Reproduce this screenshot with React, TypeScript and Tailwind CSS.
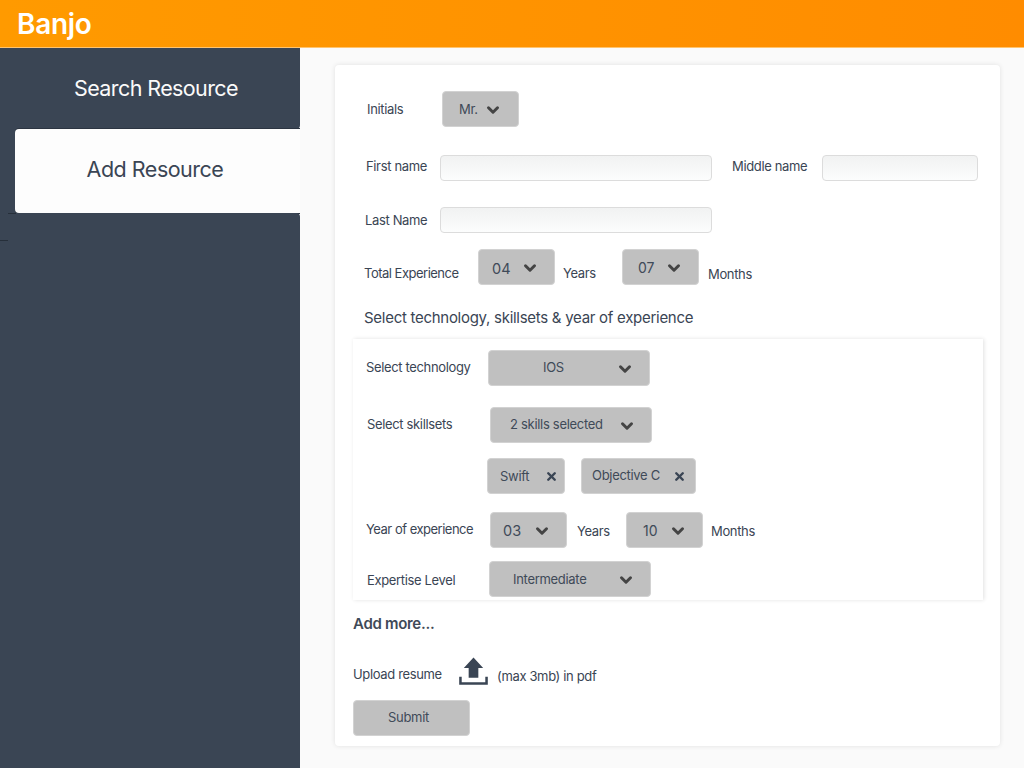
import { ChevronDown, X } from 'lucide-react'
import React from 'react'

function Dropdown({
    value,
    className,
    textClassName,
}: {
    value: string
    className: string
    textClassName: string
}) {
    return (
        <div
            className={`h-9 shrink-0 flex items-center rounded-[4px] bg-[#c0c0c0] border border-[#d2d2d2] text-[#3f4a58] ${className}`}
        >
            <span className={textClassName}>{value}</span>
            <ChevronDown size={18} strokeWidth={4} className="text-[#444] mt-[2px]" />
        </div>
    )
}

function Chip({ label, className, gap }: { label: string; className: string; gap: string }) {
    return (
        <div
            className={`h-9 shrink-0 flex items-center rounded-[4px] bg-[#c0c0c0] border border-[#d2d2d2] text-[#3f4a58] text-[13px] tracking-[-0.3px] ${className}`}
        >
            <span className={gap}>{label}</span>
            <X size={13} strokeWidth={4.5} className="text-[#3a4554]" />
        </div>
    )
}

function TextBox({ className }: { className: string }) {
    return (
        <div
            className={`h-[26px] shrink-0 rounded-[4px] border border-[#dcdcdc] bg-gradient-to-b from-[#f1f2f2] to-[#fcfdfd] ${className}`}
        />
    )
}

function Label({
    children,
    className,
    tight,
}: {
    children: React.ReactNode
    className: string
    tight?: boolean
}) {
    return (
        <span
            className={`shrink-0 text-[13px] text-[#3a4554] whitespace-nowrap ${
                tight ? 'tracking-[-0.5px]' : 'tracking-[-0.35px]'
            } ${className}`}
        >
            {children}
        </span>
    )
}

function UploadIcon() {
    return (
        <svg width="29" height="29" viewBox="0 0 30 29" className="shrink-0">
            <path d="M15 0 L25 11 L20 11 L20 21 L10 21 L10 11 L5 11 Z" fill="#3a4554" strokeLinejoin="round" />
            <path d="M1.5 20 V27 H28.5 V20" fill="none" stroke="#3a4554" strokeWidth="2.6" />
        </svg>
    )
}

export default function App() {
    return (
        <div className="w-[1024px] h-[768px] overflow-hidden flex flex-col bg-[#fafafa] font-['Inter',sans-serif]">
            <header className="h-[48px] shrink-0 flex items-center pl-[17px] bg-gradient-to-r from-[#ff9a00] to-[#ff8c00] border-b border-[#ffc46f]">
                <span className="text-[28px] font-semibold text-white tracking-[-0.3px]">Banjo</span>
            </header>
            <div className="flex flex-1 min-h-0">
                <aside className="w-[300px] shrink-0 relative flex flex-col">
                    <div className="h-[81px] flex items-center justify-center pl-[12px] rounded-br-[4px] bg-[#3a4554] text-[21.5px] tracking-[-0.6px] text-[#fafafa]">
                        Search Resource
                    </div>
                    <div className="h-[84px] pl-[15px] bg-[#3a4554]">
                        <div className="h-full flex items-center justify-center pr-[5px] pb-[4px] rounded-l-[4px] bg-[#fdfdfd] shadow-[0_-1px_0_#2c3542,0_1px_0_#2c3542] text-[21.5px] tracking-[-0.5px] text-[#3a4554]">
                            Add Resource
                        </div>
                    </div>
                    <div className="flex-1 rounded-tr-[4px] bg-[#3a4554]" />
                    <div className="absolute left-[8px] top-[165px] w-[8px] h-px bg-[#262f3a]" />
                    <div className="absolute left-0 top-[192px] w-[8px] h-px bg-[#262f3a]" />
                </aside>
                <main className="flex-1 min-w-0 pt-[17px] pl-[35px]">
                    <div className="w-[665px] h-[681px] rounded-[4px] bg-white shadow-[0_0_5px_rgba(0,0,0,0.1)] flex flex-col">
                        <div className="flex items-center mt-[26px] ml-[32px]">
                            <Label className="w-[75px] mt-[2px]">Initials</Label>
                            <Dropdown value="Mr." className="w-[77px] pl-[16px]" textClassName="w-[25px] mt-[2px] text-[13px] tracking-[-0.3px]" />
                        </div>
                        <div className="flex items-center mt-[28px] ml-[31px]">
                            <Label className="w-[74px] mb-[2px]">First name</Label>
                            <TextBox className="w-[272px]" />
                            <Label className="ml-[20px] w-[90px] mb-[2px]">Middle name</Label>
                            <TextBox className="w-[156px]" />
                        </div>
                        <div className="flex items-center mt-[26px] ml-[30px]">
                            <Label className="w-[75px] mt-[2px]">Last Name</Label>
                            <TextBox className="w-[272px]" />
                        </div>
                        <div className="flex items-start mt-[16px] ml-[29px]">
                            <Label tight className="w-[114px] mt-[15px]">Total Experience</Label>
                            <Dropdown value="04" className="w-[77px] pl-[13px]" textClassName="w-[29px] mt-[4px] text-[14.5px]" />
                            <Label className="ml-[8px] w-[59px] mt-[15px]">Years</Label>
                            <Dropdown value="07" className="w-[77px] pl-[15px]" textClassName="w-[27px] text-[14px]" />
                            <Label className="ml-[9px] mt-[16px]">Months</Label>
                        </div>
                        <div className="mt-[23px] ml-[29px] text-[15px] tracking-[-0.28px] leading-[20px] text-[#3a4554]">
                            Select technology, skillsets &amp; year of experience
                        </div>
                        <section className="mt-[11px] ml-[18px] w-[630px] h-[261px] shrink-0 bg-white shadow-[1px_0_4px_rgba(0,0,0,0.12)] flex flex-col">
                            <div className="flex items-center mt-[11px] ml-[13px]">
                                <Label className="w-[122px]">Select technology</Label>
                                <Dropdown value="IOS" className="w-[162px] pl-[54px]" textClassName="w-[73px] text-[13px] tracking-[-0.3px]" />
                            </div>
                            <div className="flex items-center mt-[21px] ml-[14px]">
                                <Label className="w-[123px]">Select skillsets</Label>
                                <Dropdown value="2 skills selected" className="w-[162px] pl-[19px]" textClassName="w-[108px] text-[13px] tracking-[-0.3px]" />
                            </div>
                            <div className="flex mt-[15px] ml-[134px]">
                                <Chip label="Swift" className="w-[78px] pl-[12px]" gap="w-[45px] mt-[2px]" />
                                <Chip label="Objective C" className="w-[115px] ml-[16px] pl-[10px]" gap="w-[81px]" />
                            </div>
                            <div className="flex items-start mt-[18px] ml-[13px]">
                                <Label tight className="w-[124px] mt-[8px]">Year of experience</Label>
                                <Dropdown value="03" className="w-[77px] pl-[12px]" textClassName="w-[30px] mt-[2px] text-[14.5px]" />
                                <Label className="ml-[10px] w-[49px] mt-[10px]">Years</Label>
                                <Dropdown value="10" className="w-[77px] pl-[16px]" textClassName="w-[26px] text-[14px]" />
                                <Label className="ml-[8px] mt-[10px]">Months</Label>
                            </div>
                            <div className="flex items-center mt-[13px] ml-[14px]">
                                <Label className="w-[122px] mt-[3px]">Expertise Level</Label>
                                <Dropdown value="Intermediate" className="w-[162px] pl-[23px]" textClassName="w-[104px] mt-[2px] text-[13px] tracking-[-0.3px]" />
                            </div>
                        </section>
                        <div className="mt-[14px] ml-[18px] text-[15px] font-semibold tracking-[-0.3px] leading-[20px] text-[#3f4a58]">
                            Add more...
                        </div>
                        <div className="flex items-start mt-[23px] ml-[18px] h-[29px]">
                            <Label className="w-[106px] mt-[8px]">Upload resume</Label>
                            <UploadIcon />
                            <Label className="ml-[9px] mt-[10px]">(max 3mb) in pdf</Label>
                        </div>
                        <div className="mt-[14px] ml-[18px] w-[117px] h-9 flex items-center pl-[34px] rounded-[4px] bg-[#c0c0c0] border border-[#d2d2d2] text-[13px] tracking-[-0.3px] text-[#3f4a58]">
                            Submit
                        </div>
                    </div>
                </main>
            </div>
        </div>
    )
}
